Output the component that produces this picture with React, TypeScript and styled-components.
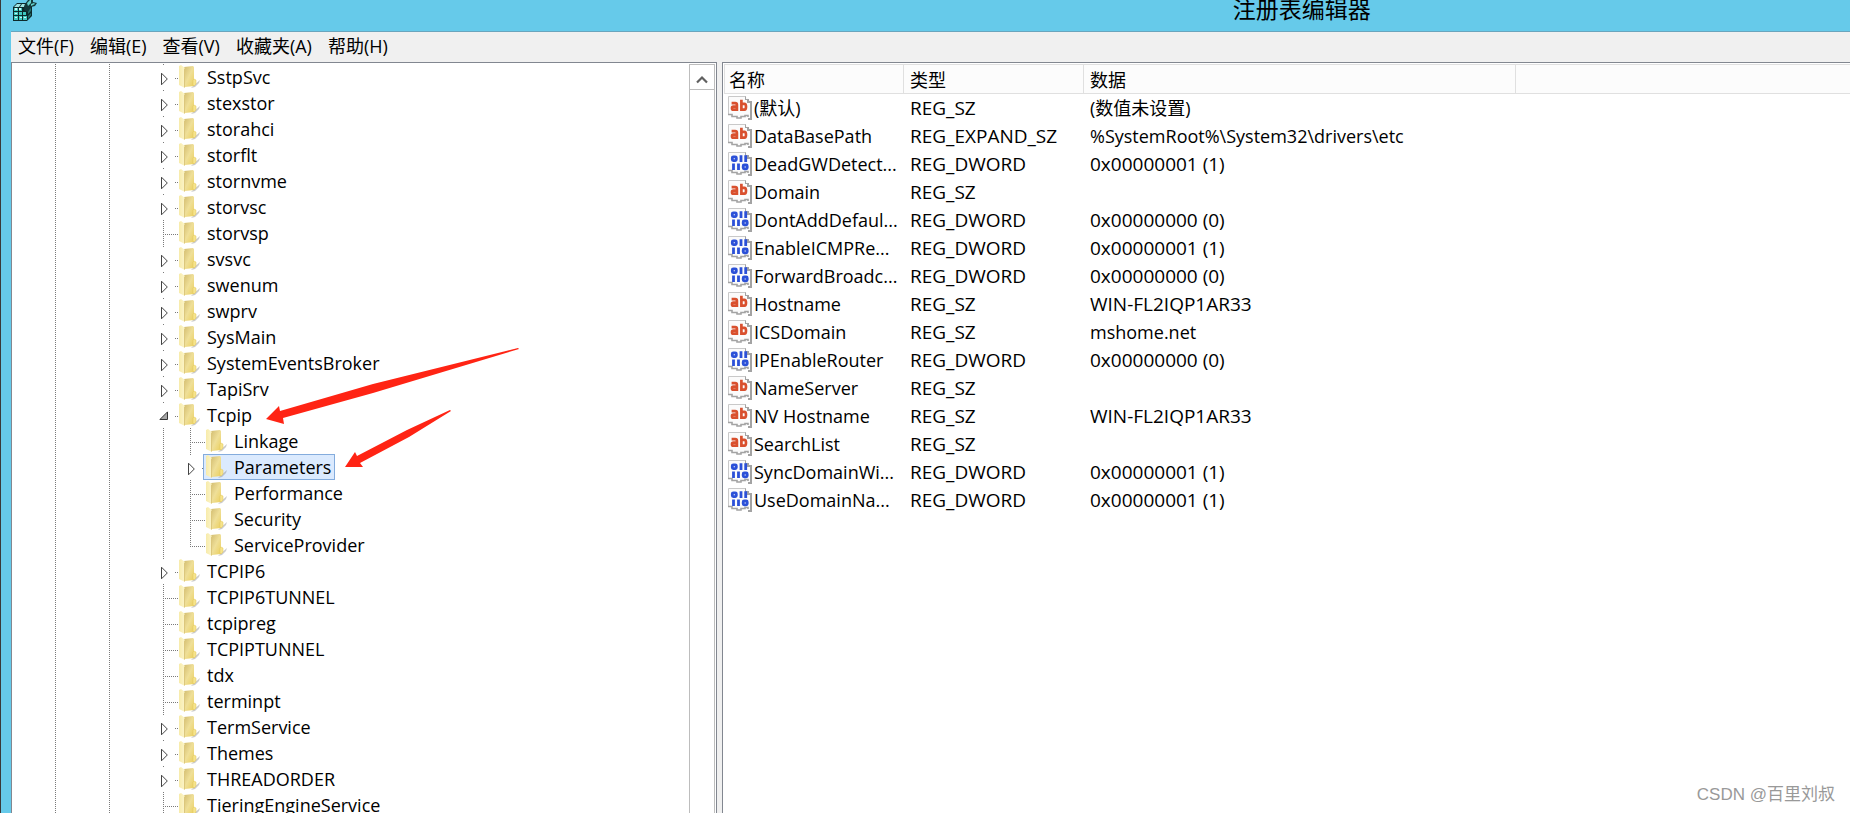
import React from "react";
import styled, { createGlobalStyle, css } from "styled-components";

const Global = createGlobalStyle`
  *, *::before, *::after { box-sizing: border-box; }
  html, body { margin: 0; height: 100%; overflow: hidden; }
  body {
    font-family: "Open Sans", "Noto Sans CJK SC", sans-serif;
    font-size: 18px;
    line-height: 24px;
    color: #000;
    background: #fff;
  }
  button, h1, ul, table { margin: 0; padding: 0; font: inherit; color: inherit; }
`;

const Window = styled.div`
  position: relative;
  display: flex;
  flex-direction: column;
  height: 100vh;
  padding-left: 10px;
  border-left: 1px solid #3a3a3a;
  background: #66caea;
`;

const TitleBar = styled.header`
  display: grid;
  grid-template-columns: 24px 5fr auto 2fr;
  height: 32px;
  border-bottom: 1px solid #6aa5bd;
`;

const AppIcon = styled.svg`
  width: 24px;
  height: 22px;
  margin-left: 2px;
`;

const Title = styled.h1`
  grid-column: 3;
  font-size: 23px;
  font-weight: 400;
  line-height: 18px;
  white-space: nowrap;
`;

const MenuBar = styled.nav`
  display: flex;
  gap: 16px;
  height: 30px;
  padding: 0 7px;
  background: #f0f0f0;
`;

const MenuButton = styled.button`
  border: 0;
  background: none;
  height: 27px;
  line-height: 26px;
  white-space: nowrap;
`;

const Panes = styled.main`
  flex: 1;
  min-height: 0;
  display: grid;
  grid-template-columns: minmax(300px, 706px) 1fr;
  gap: 5px;
  background: #f0f0f0;
`;

const Pane = styled.section`
  position: relative;
  display: flex;
  min-width: 0;
  overflow: hidden;
  border: 1px solid #828790;
  border-bottom: 0;
  padding: 1px 1px 0 0;
  background: #fff;
`;

const ValuePane = styled(Pane)`
  border-right: 0;
  padding: 1px 0 0 1px;
  align-items: flex-start;
`;

const Tree = styled.ul`
  flex: 1;
  min-width: 0;
  list-style: none;
`;

const TreeRow = styled.li`
  display: flex;
  height: 26px;
  padding-left: 39px;
`;

const Guide = styled.span<{ $width: number }>`
  flex: none;
  width: ${(p) => p.$width}px;
  background: repeating-linear-gradient(#7a7a7a 0 1px, transparent 1px 2px) 4px 0 / 1px 100% no-repeat;
`;

const Toggle = styled.button`
  flex: none;
  width: 17px;
  height: 26px;
  border: 0;
  background: none;
`;

const Branch = styled.svg`
  flex: none;
  display: block;
  width: 17px;
  height: 26px;
  overflow: visible;
`;

const NodeLabel = styled.span<{ $selected?: boolean }>`
  position: relative;
  display: flex;
  align-items: center;
  gap: 6px;
  padding: 0 3px 0 2px;
  border: 1px solid ${(p) => (p.$selected ? "#84acdd" : "transparent")};
  background: ${(p) => (p.$selected ? "#dbeafe" : "none")};
  line-height: 24px;
  white-space: nowrap;
`;

const FolderSvg = styled.svg`
  flex: none;
  width: 22px;
  height: 24px;
`;

const ScrollBar = styled.div`
  flex: none;
  width: 26px;
  border: 1px solid #bdbdbd;
  border-bottom: 0;
  background: #fff;
`;

const ScrollUp = styled.button`
  display: flex;
  align-items: center;
  justify-content: center;
  width: 100%;
  height: 25px;
  padding-top: 4px;
  border: 0;
  border-bottom: 1px solid #bdbdbd;
  background: #fff;
`;

const Annotation = styled.svg`
  position: absolute;
  left: 0;
  top: 0;
  width: 600px;
  height: 500px;
  pointer-events: none;
`;

const ValueTable = styled.table`
  width: 100%;
  table-layout: fixed;
  border-collapse: separate;
  border-spacing: 0;
`;

const Col = styled.col<{ $width?: number }>`
  ${(p) => p.$width && `width: ${p.$width}px;`}
`;

const HeadCell = styled.th`
  height: 30px;
  padding: 2px 0 0 6px;
  border: solid #e0e0e0;
  border-width: 1px 1px 1px 0;
  background: #fcfcfc;
  font-weight: 400;
  text-align: left;
  &:first-child { border-left-width: 1px; padding-left: 4px; }
  &:last-child { border-right-width: 0; }
`;

const Cell = styled.td<{ $large?: boolean }>`
  height: 28px;
  padding: 0 0 0 6px;
  white-space: nowrap;
  overflow: hidden;
  ${(p) =>
    p.$large &&
    css`
      font-size: 19px;
    `}
`;

const NameCell = styled.div`
  display: flex;
  align-items: center;
  gap: 2px;
  margin-left: -2px;
`;

const ValueSvg = styled.svg`
  flex: none;
  width: 24px;
  height: 24px;
`;

const Watermark = styled.footer`
  position: absolute;
  right: 15px;
  bottom: 6px;
  font-family: "Liberation Sans", "Noto Sans CJK SC", sans-serif;
  font-size: 17px;
  color: #999;
`;

const Folder = () => (
  <FolderSvg viewBox="0 0 22 24" aria-hidden="true">
    <path d="M14 21L21 15L20 18L16 22L12 23Z" fill="#8c8c8c" opacity="0.45" />
    <path d="M5 2L14 1L15 2V21L6 22Z" fill="url(#folderBack)" />
    <path d="M0 1L2 0L6 3V23L0 20Z" fill="url(#folderFront)" />
    <path d="M5 4L6 3V22L5 23Z" fill="#dcc77c" />
    <path d="M14 15L15 14L17 15V19L15 21L14 20Z" fill="#f6e48c" stroke="#e2c65a" strokeWidth="0.5" />
  </FolderSvg>
);

type Kind = "open" | "closed" | "leaf" | "last";

const BranchLines = ({ kind }: { kind: Kind }) => {
  const dots = { stroke: "#7a7a7a", strokeWidth: 1, strokeDasharray: "1 1" };
  const leaf = kind === "leaf" || kind === "last";
  return (
    <Branch viewBox="0 0 17 26" aria-hidden="true">
      <path d={leaf ? (kind === "last" ? "M4.5 0V15" : "M4.5 0V26") : "M4.5 0V1"} {...dots} />
      <path d={leaf ? "M6 14.5H19" : "M16 14.5H19"} {...dots} />
      {kind === "closed" && <path d="M2.5 9.2V20.8L8.3 15Z" fill="#fff" stroke="#444" />}
      {kind === "open" && <path d="M0.9 17.5H8.5V9.9Z" fill="#a6a6a6" stroke="#333" />}
    </Branch>
  );
};

interface Node {
  name: string;
  kind: Kind;
  child?: boolean;
  selected?: boolean;
}

const nodes: Node[] = [
  { name: "SstpSvc", kind: "closed" },
  { name: "stexstor", kind: "closed" },
  { name: "storahci", kind: "closed" },
  { name: "storflt", kind: "closed" },
  { name: "stornvme", kind: "closed" },
  { name: "storvsc", kind: "closed" },
  { name: "storvsp", kind: "leaf" },
  { name: "svsvc", kind: "closed" },
  { name: "swenum", kind: "closed" },
  { name: "swprv", kind: "closed" },
  { name: "SysMain", kind: "closed" },
  { name: "SystemEventsBroker", kind: "closed" },
  { name: "TapiSrv", kind: "closed" },
  { name: "Tcpip", kind: "open" },
  { name: "Linkage", kind: "leaf", child: true },
  { name: "Parameters", kind: "closed", child: true, selected: true },
  { name: "Performance", kind: "leaf", child: true },
  { name: "Security", kind: "leaf", child: true },
  { name: "ServiceProvider", kind: "last", child: true },
  { name: "TCPIP6", kind: "closed" },
  { name: "TCPIP6TUNNEL", kind: "leaf" },
  { name: "tcpipreg", kind: "leaf" },
  { name: "TCPIPTUNNEL", kind: "leaf" },
  { name: "tdx", kind: "leaf" },
  { name: "terminpt", kind: "leaf" },
  { name: "TermService", kind: "closed" },
  { name: "Themes", kind: "closed" },
  { name: "THREADORDER", kind: "closed" },
  { name: "TieringEngineService", kind: "leaf" },
];

const values: [string, string, string][] = [
  ["(默认)", "REG_SZ", "(数值未设置)"],
  ["DataBasePath", "REG_EXPAND_SZ", "%SystemRoot%\\System32\\drivers\\etc"],
  ["DeadGWDetect...", "REG_DWORD", "0x00000001 (1)"],
  ["Domain", "REG_SZ", ""],
  ["DontAddDefaul...", "REG_DWORD", "0x00000000 (0)"],
  ["EnableICMPRe...", "REG_DWORD", "0x00000001 (1)"],
  ["ForwardBroadc...", "REG_DWORD", "0x00000000 (0)"],
  ["Hostname", "REG_SZ", "WIN-FL2IQP1AR33"],
  ["ICSDomain", "REG_SZ", "mshome.net"],
  ["IPEnableRouter", "REG_DWORD", "0x00000000 (0)"],
  ["NameServer", "REG_SZ", ""],
  ["NV Hostname", "REG_SZ", "WIN-FL2IQP1AR33"],
  ["SearchList", "REG_SZ", ""],
  ["SyncDomainWi...", "REG_DWORD", "0x00000001 (1)"],
  ["UseDomainNa...", "REG_DWORD", "0x00000001 (1)"],
];

const startsWithDigitOrCap = (text: string) => /^[A-Z0-9]/.test(text);

const ValueIcon = ({ binary }: { binary: boolean }) => (
  <ValueSvg viewBox="0 0 24 24" aria-hidden="true">
    <path d="M0.5 19V0.5H18L22 4.5V22H12L9 21L4 20Z" fill="#fbfbfb" />
    <path d="M0.5 19V0.5H18" fill="none" stroke="#c9c9c9" />
    <path d="M18 0V3H21V5H24V24H20V22H22V7H19V4H17V1Z" fill="#a3a3a3" />
    <path d="M0 18.5H4V20.5H9V22H13V20.5H17V19.5H20V21" fill="none" stroke="#a3a3a3" strokeWidth="1.6" />
    {binary ? (
      <g fill="none" stroke="#2b50d8" strokeWidth="2.8">
        <rect x="4.3" y="4.8" width="4" height="3.8" rx="1" />
        <path d="M13 3.3V10M17.7 3.3V10M5.5 11.6V18M10.5 11.6V18" />
        <rect x="15.2" y="13" width="4" height="3.8" rx="1" />
      </g>
    ) : (
      <g fill="none" stroke="#d9502e" strokeWidth="2.7">
        <path d="M3.6 7.2H7.2Q8.9 7.2 8.9 8.8V15M8.9 10.7H5.4Q4 10.7 4 12.2T5.4 13.7H8.9" />
        <path d="M13.4 3.7V15M13.4 7.8H16.4Q18 7.8 18 10.7T16.4 13.7H13.4" />
      </g>
    )}
  </ValueSvg>
);

const menus = ["文件(F)", "编辑(E)", "查看(V)", "收藏夹(A)", "帮助(H)"];

export default function App() {
  return (
    <>
      <Global />
      <Window>
        <TitleBar>
          <AppIcon viewBox="0 0 24 22" aria-hidden="true">
            <path d="M0 7L4 3L14 3L19 6V16L14 21H0Z" fill="#0d2a2c" />
            <path d="M1 7L4 4H8L6 7ZM9 4H12L11 7H7Z" fill="#9fe4e2" />
            <path d="M1 8H5V11H1ZM6 8H9V11H6ZM1 12H5V15H1ZM6 12H9V15H6ZM1 16H5V20H1ZM6 16H9V20H6ZM10 16H14V20H10ZM10 12H13V15H10Z" fill="#3fc8c0" />
            <path d="M2 8H4V10H2ZM6 8H8V10H6ZM2 13H4V14H2ZM7 17H9V18H7ZM2 17H4V18H2ZM11 17H13V18H11Z" fill="#c8faf6" />
            <path d="M15 10L18 8V11L15 14ZM15 16L18 13V15L15 19Z" fill="#23706f" />
            <path d="M12 4L15 0H20V2L24 3L22 6L18 7L15 12L11 10Z" fill="#14393b" />
            <path d="M14 3L17 0H18V3L15 6ZM18 4L21 3L22 4L18 6Z" fill="#63cfca" />
          </AppIcon>
          <Title>注册表编辑器</Title>
        </TitleBar>
        <MenuBar>
          {menus.map((m) => (
            <MenuButton key={m} type="button">
              {m}
            </MenuButton>
          ))}
        </MenuBar>
        <Panes>
          <Pane>
            <Tree role="tree">
              {nodes.map((n) => {
                const lines = <BranchLines kind={n.kind} />;
                const leaf = n.kind === "leaf" || n.kind === "last";
                return (
                  <TreeRow key={n.name} role="treeitem" aria-selected={!!n.selected}>
                    <Guide $width={54} />
                    <Guide $width={54} />
                    {n.child && <Guide $width={27} />}
                    {leaf ? (
                      lines
                    ) : (
                      <Toggle type="button" aria-label={n.name} aria-expanded={n.kind === "open"}>
                        {lines}
                      </Toggle>
                    )}
                    <NodeLabel $selected={n.selected}>
                      <Folder />
                      {n.name}
                    </NodeLabel>
                  </TreeRow>
                );
              })}
            </Tree>
            <ScrollBar>
              <ScrollUp type="button" aria-label="Scroll up">
                <svg width="12" height="9" viewBox="0 0 12 9" aria-hidden="true">
                  <path d="M1 7.5L6 2.5L11 7.5" fill="none" stroke="#606060" strokeWidth="2.2" />
                </svg>
              </ScrollUp>
            </ScrollBar>
            <Annotation viewBox="12 63 600 500" aria-hidden="true">
              <defs>
                <linearGradient id="folderFront" x1="0" x2="1">
                  <stop offset="0" stopColor="#f7ebaa" />
                  <stop offset="1" stopColor="#fcf5cb" />
                </linearGradient>
                <linearGradient id="folderBack" x1="0" x2="1" y2="1">
                  <stop offset="0" stopColor="#d2bc70" />
                  <stop offset="0.5" stopColor="#efdf98" />
                  <stop offset="1" stopColor="#ebcf5c" />
                </linearGradient>
              </defs>
              <g fill="#ff2414">
                <path d="M266 419L279 406L280 411L373 384L518 348L519 349L373 393L283 418L284 424Z" />
                <path d="M345 467L355 452L357 456L407 430L450 410L451 411L409 437L360 463L363 467Z" />
              </g>
            </Annotation>
          </Pane>
          <ValuePane>
            <ValueTable>
              <colgroup>
                <Col $width={180} />
                <Col $width={180} />
                <Col $width={432} />
                <Col />
              </colgroup>
              <thead>
                <tr>
                  <HeadCell>名称</HeadCell>
                  <HeadCell>类型</HeadCell>
                  <HeadCell>数据</HeadCell>
                  <HeadCell />
                </tr>
              </thead>
              <tbody>
                {values.map(([name, type, data]) => (
                  <tr key={name}>
                    <Cell>
                      <NameCell>
                        <ValueIcon binary={type === "REG_DWORD"} />
                        <span>{name}</span>
                      </NameCell>
                    </Cell>
                    <Cell $large>{type}</Cell>
                    <Cell $large={startsWithDigitOrCap(data)}>{data}</Cell>
                    <Cell />
                  </tr>
                ))}
              </tbody>
            </ValueTable>
          </ValuePane>
        </Panes>
        <Watermark>CSDN @百里刘叔</Watermark>
      </Window>
    </>
  );
}
